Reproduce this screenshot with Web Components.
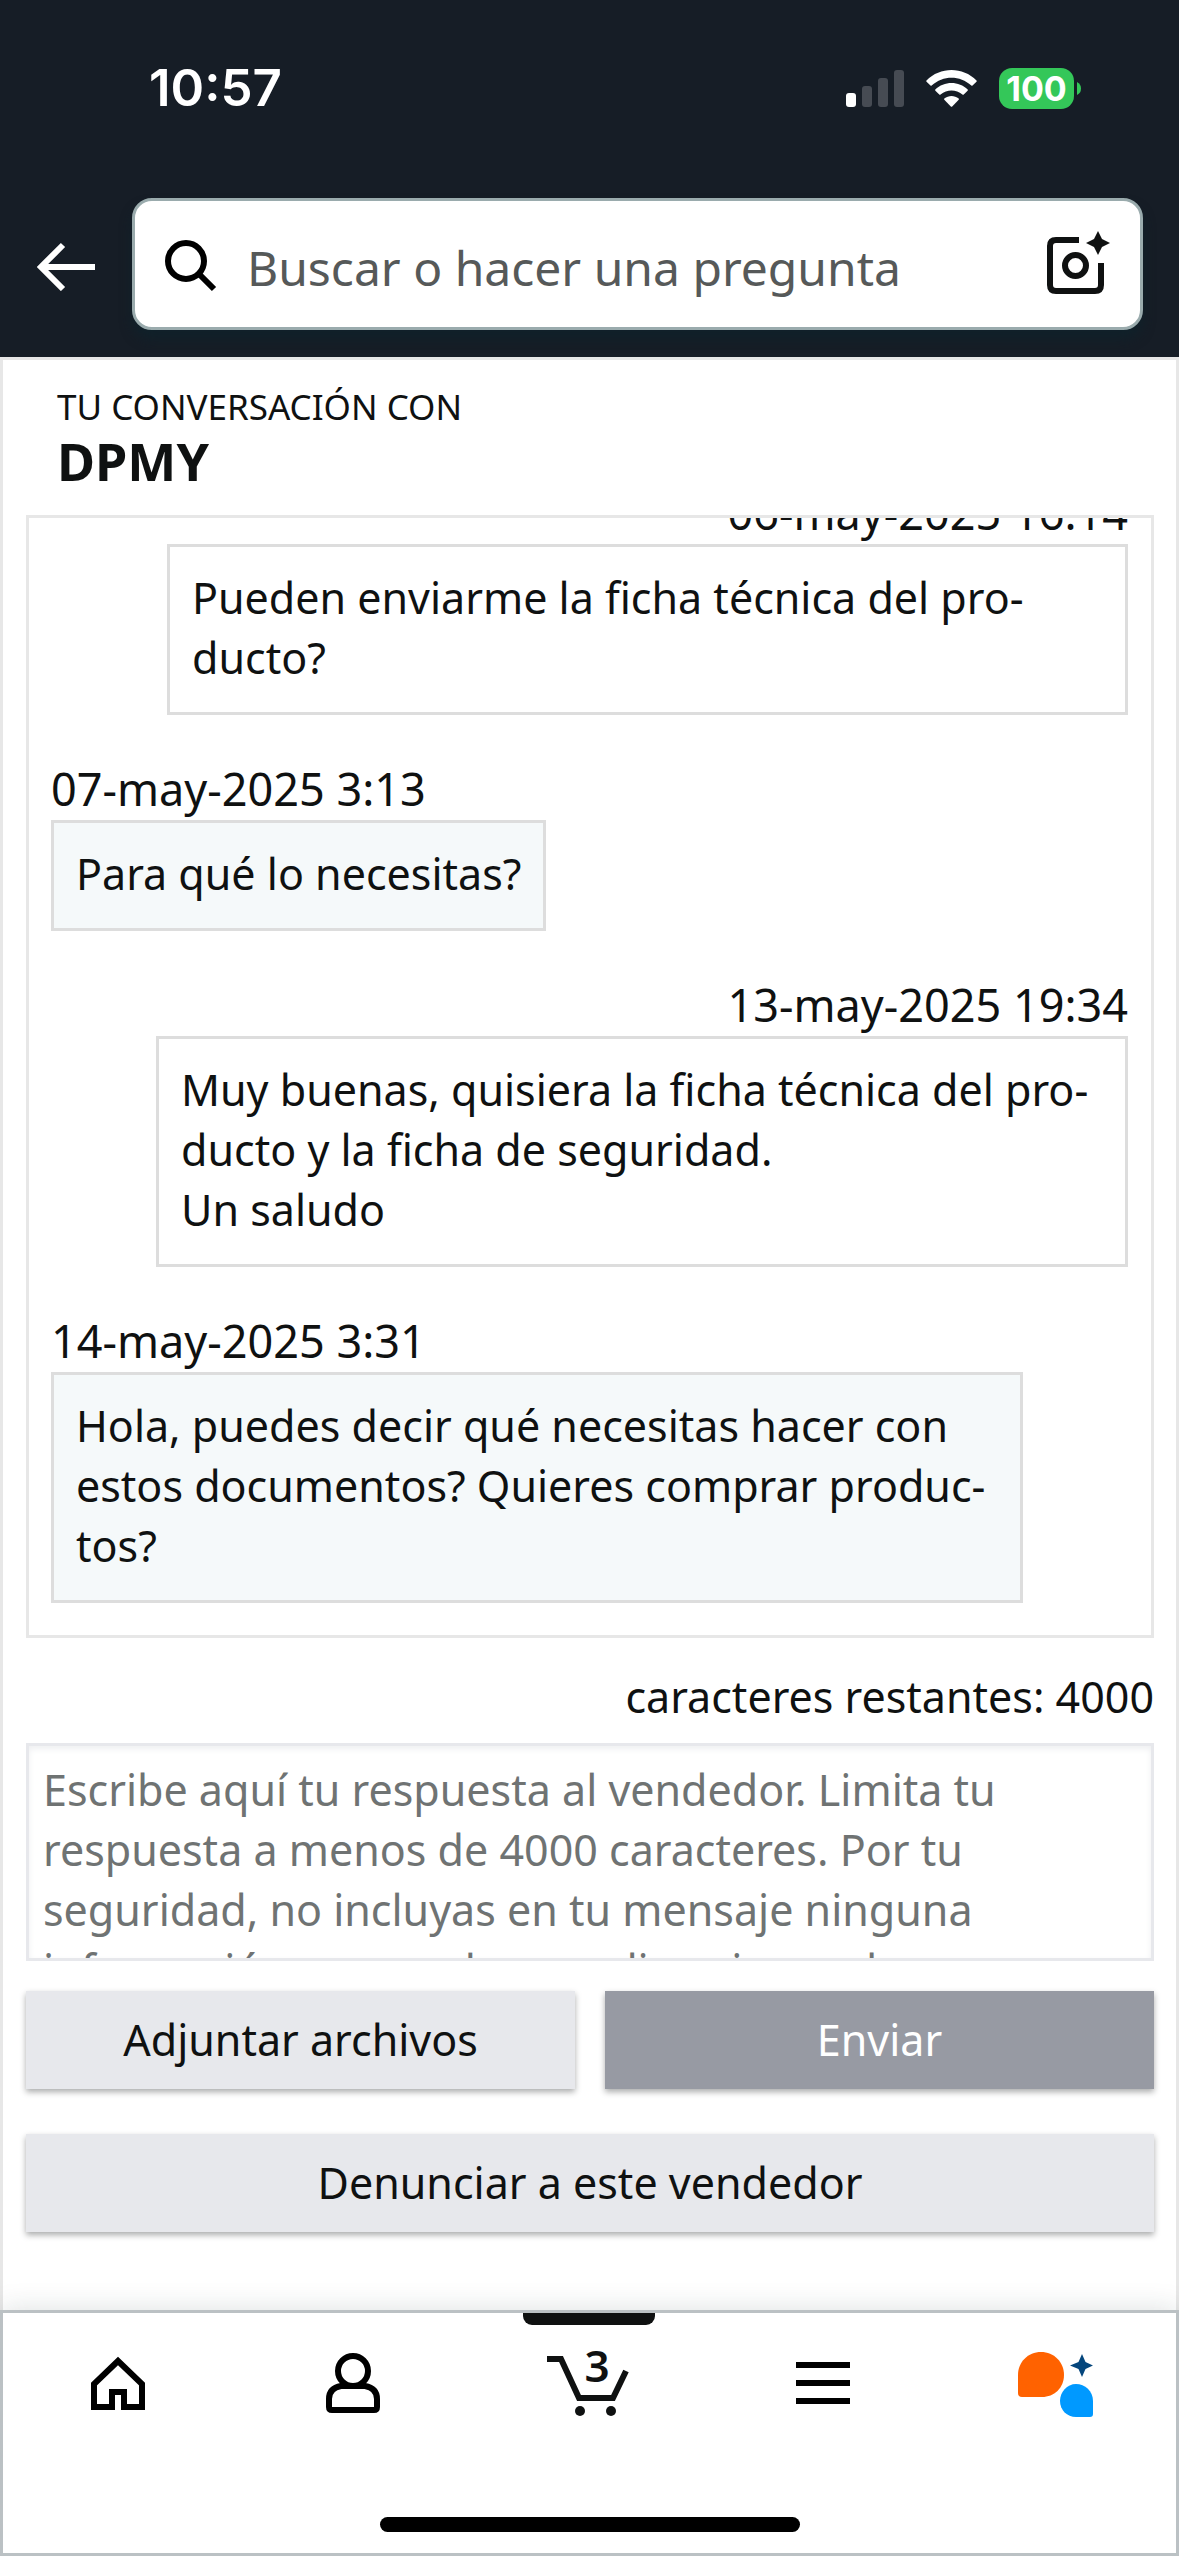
<!DOCTYPE html>
<html lang="es">
<head>
<meta charset="utf-8">
<meta name="viewport" content="width=device-width, initial-scale=1">
<title>Tu conversación con DPMY</title>
<style>
  body {
    margin: 0;
    font-family: "Noto Sans", "Open Sans", sans-serif;
    font-size: 43px;
    line-height: 60px;
    color: #0f1111;
    background: #fff;
  }
</style>
</head>
<body>
<chat-app>
  <status-bar slot="top" time="10:57" battery="100"></status-bar>
  <search-header slot="top" placeholder="Buscar o hacer una pregunta"></search-header>
  <conversation-title label="Tu conversación con" name="DPMY"></conversation-title>
  <message-thread>
    <chat-message date="06-may-2025 16:14" mine narrow>Pueden enviarme la ficha técnica del pro&shy;ducto?</chat-message>
    <chat-message date="07-may-2025 3:13">Para qué lo necesitas?</chat-message>
    <chat-message date="13-may-2025 19:34" mine>Muy buenas, quisiera la ficha técnica del pro&shy;ducto y la ficha de seguridad.<br>Un saludo</chat-message>
    <chat-message date="14-may-2025 3:31">Hola, puedes decir qué necesitas hacer con estos documentos? Quieres comprar produc&shy;tos?</chat-message>
  </message-thread>
  <reply-form limit="4000"></reply-form>
  <tab-bar slot="bottom" cart="3"></tab-bar>
</chat-app>

<script>
  class ChatApp extends HTMLElement {
    constructor() {
      super();
      this.attachShadow({ mode: "open" });
    }

    connectedCallback() {
      this.shadowRoot.innerHTML = `
        <style>
          :host { display: flex; flex-direction: column; height: 100vh; }
          main {
            flex: 1;
            min-height: 0;
            display: flex;
            flex-direction: column;
            padding: 0 22px 78px 23px;
            border: 3px solid #e7e7e7;
            border-bottom: 0;
          }
        </style>
        <slot name="top"></slot>
        <main><slot></slot></main>
        <slot name="bottom"></slot>
      `;
    }
  }

  class StatusBar extends HTMLElement {
    constructor() {
      super();
      this.attachShadow({ mode: "open" });
    }

    connectedCallback() {
      this.shadowRoot.innerHTML = `
        <style>
          :host {
            display: flex;
            align-items: center;
            justify-content: space-between;
            height: 176px;
            padding: 0 98px 0 149px;
            box-sizing: border-box;
            background: #161d26;
            color: #fff;
            font-family: Inter, sans-serif;
          }
          .time { font-size: 51px; font-weight: 600; }
          .icons { display: flex; align-items: center; gap: 22px; }
          .battery { display: flex; align-items: center; gap: 3px; }
          .level {
            width: 75px;
            height: 41px;
            border-radius: 13px;
            background: #34c759;
            font-size: 34px;
            font-weight: 700;
            line-height: 41px;
            text-align: center;
          }
        </style>
        <span class="time">${this.getAttribute("time")}</span>
        <div class="icons">
          <svg width="58" height="37" viewBox="0 0 58 37" fill="#464b53">
            <rect y="23" width="10" height="14" rx="3" fill="#fff"/>
            <rect x="16" y="16" width="10" height="21" rx="3"/>
            <rect x="32" y="8" width="10" height="29" rx="3"/>
            <rect x="48" width="10" height="37" rx="3"/>
          </svg>
          <svg width="51" height="37" viewBox="0 0 51 37" fill="#fff">
            <path d="M0.5 10.5C14 -3.5 37 -3.5 50.5 10.5Q51 11 50.5 11.8L46.5 15.6Q46 16 45.3 15.5C34 5 17 5 5.7 15.5Q5 16 4.5 15.6L.5 11.8Q0 11 .5 10.5Z"/>
            <path d="M9.3 19.6C18 10.8 33 10.8 41.7 19.6Q42.2 20.2 41.6 20.8L37.5 24.7Q37 25 36.4 24.6C30 19.2 21 19.2 14.6 24.6Q14 25 13.5 24.7L9.4 20.8Q8.8 20.2 9.3 19.6Z"/>
            <path d="M18.3 28.6C22.5 25 28.5 25 32.7 28.6Q33.2 29.2 32.7 29.8L26.2 36.4Q25.5 37 24.8 36.4L18.3 29.8Q17.8 29.2 18.3 28.6Z"/>
          </svg>
          <div class="battery">
            <span class="level">${this.getAttribute("battery")}</span>
            <svg width="4" height="13" viewBox="0 0 4 13"><path d="M0 0Q4 2 4 6.5T0 13Z" fill="#34c759"/></svg>
          </div>
        </div>
      `;
    }
  }

  class SearchHeader extends HTMLElement {
    constructor() {
      super();
      this.attachShadow({ mode: "open" });
    }

    connectedCallback() {
      this.shadowRoot.innerHTML = `
        <style>
          :host {
            display: flex;
            align-items: center;
            gap: 35px;
            padding: 22px 36px 27px 37px;
            background: #161d26;
          }
          button { display: flex; border: 0; padding: 0; background: none; }
          form {
            flex: 1;
            display: flex;
            align-items: center;
            height: 132px;
            box-sizing: border-box;
            padding: 0 30px;
            border: 3px solid #9aabad;
            border-radius: 20px;
            background: #fff;
            box-shadow: 0 9px 12px #10212a;
          }
          label { display: flex; }
          input {
            flex: 1;
            min-width: 0;
            height: 66px;
            margin: 6px 0 0 28px;
            padding: 0;
            border: 0;
            outline: 0;
            background: none;
            font: 48px "Noto Sans", "Open Sans", sans-serif;
          }
          input::placeholder { color: #565959; opacity: 1; }
        </style>
        <button type="button" aria-label="Volver">
          <svg width="60" height="54" viewBox="0 0 60 54" fill="none" stroke="#fff" stroke-width="6">
            <path d="M58 30H6M26 8L4 30L26 52"/>
          </svg>
        </button>
        <form>
          <label for="query" aria-label="Buscar">
            <svg width="54" height="58" viewBox="0 0 54 58" fill="none" stroke="#000" stroke-width="6">
              <circle cx="21" cy="26" r="18"/>
              <path d="M34 39L49 54"/>
            </svg>
          </label>
          <input id="query" type="text" placeholder="${this.getAttribute("placeholder")}">
          <button type="button" aria-label="Buscar con la cámara">
            <svg width="64" height="66" viewBox="0 0 64 66" fill="none" stroke="#0f1111" stroke-width="6">
              <path d="M33 9H10Q4 9 4 15V54Q4 60 10 60H49Q55 60 55 54V32"/>
              <circle cx="29.5" cy="34.5" r="10.5"/>
              <path d="M52 0L56 8L64 12L56 16L52 24L48 16L40 12L48 8Z" fill="#0f1111" stroke="none"/>
            </svg>
          </button>
        </form>
      `;
    }
  }

  class ConversationTitle extends HTMLElement {
    constructor() {
      super();
      this.attachShadow({ mode: "open" });
    }

    connectedCallback() {
      this.shadowRoot.innerHTML = `
        <style>
          :host { display: block; padding: 22px 31px 25px; }
          p { margin: 0; font-size: 35px; line-height: 50px; text-transform: uppercase; }
          h1 { margin: 0; font-size: 52px; line-height: 58px; font-weight: 700; }
        </style>
        <p>${this.getAttribute("label")}</p>
        <h1>${this.getAttribute("name")}</h1>
      `;
    }
  }

  class MessageThread extends HTMLElement {
    constructor() {
      super();
      this.attachShadow({ mode: "open" });
    }

    connectedCallback() {
      // anchored to the newest message, older ones run off the top
      this.shadowRoot.innerHTML = `
        <style>
          :host {
            flex: 1;
            min-height: 0;
            display: flex;
            flex-direction: column;
            justify-content: flex-end;
            gap: 45px;
            padding: 0 23px 32px 22px;
            border: 3px solid #e7e7e7;
            overflow: hidden;
          }
        </style>
        <slot></slot>
      `;
    }
  }

  class ChatMessage extends HTMLElement {
    constructor() {
      super();
      this.attachShadow({ mode: "open" });
    }

    connectedCallback() {
      this.shadowRoot.innerHTML = `
        <style>
          :host {
            display: flex;
            flex-direction: column;
            align-items: flex-start;
            flex-shrink: 0;
          }
          :host([mine]) { align-items: flex-end; }
          time { font-size: 45px; line-height: 58px; margin-bottom: 2px; }
          .bubble {
            max-width: calc(100% - 105px);
            box-sizing: border-box;
            padding: 21px 22px 24px;
            border: 3px solid #ddd;
            background: #f5f9fa;
          }
          :host([mine]) .bubble { background: #fff; }
          :host([narrow]) .bubble { max-width: calc(100% - 116px); }
        </style>
        <time>${this.getAttribute("date")}</time>
        <div class="bubble"><slot></slot></div>
      `;
    }
  }

  class ReplyForm extends HTMLElement {
    constructor() {
      super();
      this.attachShadow({ mode: "open" });
    }

    connectedCallback() {
      const limit = this.getAttribute("limit");
      this.shadowRoot.innerHTML = `
        <style>
          :host { display: block; }
          form { display: flex; flex-direction: column; }
          label { text-align: right; padding: 29px 0 16px; }
          textarea {
            height: 218px;
            box-sizing: border-box;
            margin: 0 0 30px;
            padding: 14px;
            border: 3px solid #e7e8ec;
            border-radius: 0;
            outline: 0;
            resize: none;
            overflow: hidden;
            box-shadow: inset 0 3px 6px #eeeff1;
            font: inherit;
            line-height: 60px;
            color: inherit;
          }
          textarea::placeholder { color: #6f7373; opacity: 1; }
          .row { display: grid; grid-template-columns: 1fr 1fr; gap: 30px; margin-bottom: 45px; }
          button {
            height: 98px;
            padding: 0;
            border: 0;
            background: #e7e8ec;
            color: #0f1111;
            font: inherit;
            box-shadow: 0 3px 6px rgba(15, 17, 17, .35);
          }
          .send { background: #979aa3; color: #fff; }
        </style>
        <form>
          <label for="reply">caracteres restantes: ${limit}</label>
          <textarea id="reply" maxlength="${limit}" placeholder="Escribe aquí tu respuesta al vendedor. Limita tu respuesta a menos de ${limit} caracteres. Por tu seguridad, no incluyas en tu mensaje ninguna información personal como direcciones de correo electrónico."></textarea>
          <div class="row">
            <button type="button">Adjuntar archivos</button>
            <button type="button" class="send">Enviar</button>
          </div>
          <button type="button">Denunciar a este vendedor</button>
        </form>
      `;
    }
  }

  class TabBar extends HTMLElement {
    constructor() {
      super();
      this.attachShadow({ mode: "open" });
    }

    connectedCallback() {
      this.shadowRoot.innerHTML = `
        <style>
          :host {
            display: flex;
            flex-direction: column;
            justify-content: space-between;
            align-items: center;
            height: 246px;
            box-sizing: border-box;
            border: 3px solid #bbc1c4;
            background: #fff;
            box-shadow: 0 0 27px rgba(20, 50, 45, .15);
          }
          nav { display: grid; grid-template-columns: repeat(5, 1fr); width: 100%; }
          a {
            position: relative;
            display: flex;
            justify-content: center;
            padding-top: 32px;
            color: #000;
            text-decoration: none;
          }
          .active::before {
            content: "";
            position: absolute;
            top: 0;
            width: 132px;
            height: 12px;
            border-radius: 0 0 9px 9px;
            background: #0f1111;
          }
          .count {
            position: absolute;
            top: 32px;
            left: 50%;
            margin-left: -5px;
            font-size: 44px;
            line-height: 40px;
            font-weight: 600;
            color: #0f1111;
          }
          .indicator { width: 420px; height: 15px; margin-bottom: 21px; border-radius: 8px; background: #000; }
        </style>
        <nav>
          <a href="#" aria-label="Inicio">
            <svg width="90" height="80" viewBox="0 0 90 80" fill="none" stroke="#000" stroke-width="6">
              <path d="M19 62V39L43 16L67 39V62H49V47H37V62Z"/>
            </svg>
          </a>
          <a href="#" aria-label="Tu cuenta">
            <svg width="90" height="80" viewBox="0 0 90 80" fill="none" stroke="#000" stroke-width="6">
              <circle cx="43" cy="26" r="15"/>
              <path d="M31 41H55Q67 43 67 54V62Q67 65 64 65H22Q19 65 19 62V54Q19 43 31 41Z"/>
            </svg>
          </a>
          <a href="#" class="active" aria-label="Cesta">
            <svg width="90" height="80" viewBox="0 0 90 80" fill="none" stroke="#0f1111" stroke-width="6">
              <path d="M3 14H17L35 53H69L82 26"/>
              <circle cx="36" cy="66" r="5" fill="#0f1111" stroke="none"/>
              <circle cx="67" cy="66" r="5" fill="#0f1111" stroke="none"/>
            </svg>
            <span class="count">${this.getAttribute("cart")}</span>
          </a>
          <a href="#" aria-label="Menú">
            <svg width="90" height="80" viewBox="0 0 90 80" fill="none" stroke="#000" stroke-width="6">
              <path d="M17 20H71M17 38H71M17 56H71"/>
            </svg>
          </a>
          <a href="#" aria-label="Asistente">
            <svg width="90" height="80" viewBox="0 0 90 80">
              <path d="M4 48V30C4 17 14 7 27 7S50 17 50 30S40 52 28 52H8Q4 52 4 48Z" fill="#ff6200"/>
              <path d="M79 56V69Q79 72 76 72H62C53 72 46 65 46 56S53 39 62 39S79 46 79 56Z" fill="#0099ff"/>
              <path d="M68 9L71.5 17L79 20.500L71.500 24L68 32L64.500 24L56 20.500L64.500 17Z" fill="#05467c"/>
            </svg>
          </a>
        </nav>
        <div class="indicator"></div>
      `;
    }
  }

  customElements.define("chat-app", ChatApp);
  customElements.define("status-bar", StatusBar);
  customElements.define("search-header", SearchHeader);
  customElements.define("conversation-title", ConversationTitle);
  customElements.define("message-thread", MessageThread);
  customElements.define("chat-message", ChatMessage);
  customElements.define("reply-form", ReplyForm);
  customElements.define("tab-bar", TabBar);
</script>
</body>
</html>
